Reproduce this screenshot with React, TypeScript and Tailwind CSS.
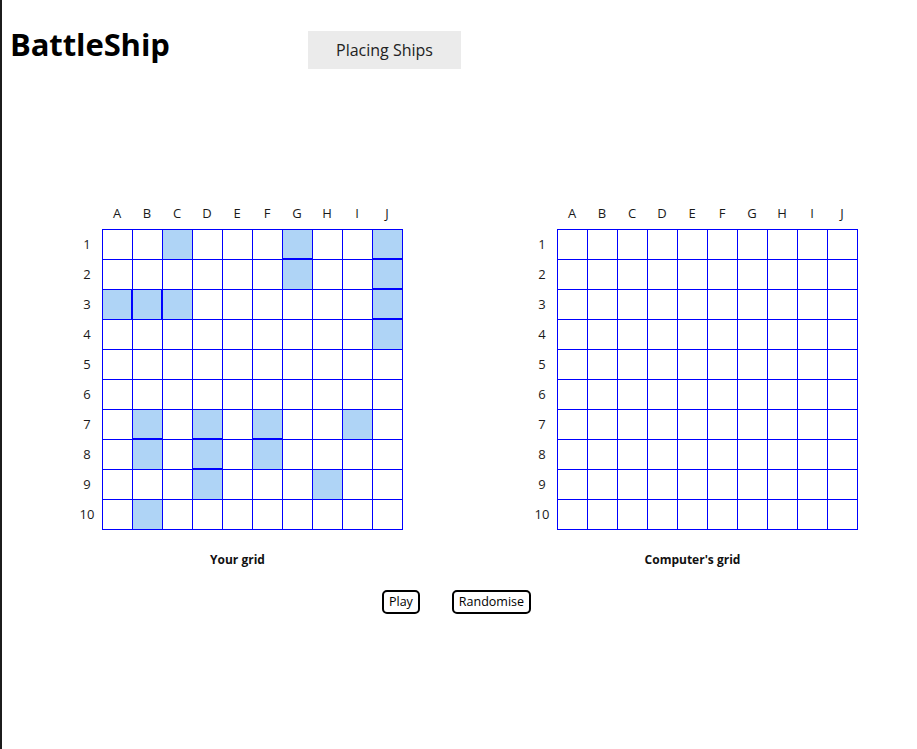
import React from 'react';

const letters = ['A', 'B', 'C', 'D', 'E', 'F', 'G', 'H', 'I', 'J'];

// ship cells on the player's board, as "row-col" (0-based)
const ships = new Set([
  '0-2', '0-6', '0-9',
  '1-6', '1-9',
  '2-0', '2-1', '2-2', '2-9',
  '3-9',
  '6-1', '6-3', '6-5', '6-8',
  '7-1', '7-3', '7-5',
  '8-3', '8-7',
  '9-1'
]);

interface BoardProps {
  title: string;
  showShips?: boolean;
}

const Board: React.FC<BoardProps> = ({ title, showShips = false }) => {
  const isShip = (r: number, c: number) => showShips && ships.has(`${r}-${c}`);

  const cellClass = (r: number, c: number) => {
    const ship = isShip(r, c);
    const below = isShip(r + 1, c);
    const right = isShip(r, c + 1);
    return [
      'w-[29px] h-[29px]',
      ship ? 'bg-[#afd4f6]' : 'bg-white',
      ship && below && right ? 'shadow-[inset_0_-1px_0_#0000ff,inset_-1px_0_0_#0000ff]' : '',
      ship && below && !right ? 'shadow-[inset_0_-1px_0_#0000ff]' : '',
      ship && right && !below ? 'shadow-[inset_-1px_0_0_#0000ff]' : ''
    ].filter(Boolean).join(' ');
  };

  return (
    <div className="flex flex-col items-center">
      <div className="flex flex-col">
        <div className="flex">
          <div className="w-[30px] h-[30px]" />
          {letters.map((l) => (
            <div key={l} className="w-[30px] h-[30px] flex items-center justify-center text-[13px] text-[#1a1a1a]">
              {l}
            </div>
          ))}
        </div>
        <div className="flex">
          <div className="flex flex-col pt-px">
            {Array.from({ length: 10 }).map((_, r) => (
              <div key={r} className="w-[30px] h-[30px] flex items-center justify-center text-[13px] text-[#1a1a1a]">
                {r + 1}
              </div>
            ))}
          </div>
          <div className="grid grid-cols-[repeat(10,29px)] gap-px p-px bg-[#0000ff] w-[301px] h-[301px]">
            {Array.from({ length: 100 }).map((_, i) => {
              const r = Math.floor(i / 10);
              const c = i % 10;
              return <div key={i} className={cellClass(r, c)} />;
            })}
          </div>
        </div>
      </div>
      <div className="mt-[21px] text-[12px] font-bold text-[#111]">{title}</div>
    </div>
  );
};

const App: React.FC = () => {
  return (
    <div className="min-h-screen bg-white border-l-2 border-[#1c1c1c] font-['Open_Sans',sans-serif] text-black">
      <div className="flex items-start">
        <h1 className="w-[306px] pl-[8px] pt-[24px] text-[31px] font-bold leading-[40px] tracking-[-0.1px]">
          BattleShip
        </h1>
        <div className="mt-[31px] w-[153px] h-[38px] bg-[#ebebeb] flex items-center justify-center text-[16px] text-[#222]">
          Placing Ships
        </div>
      </div>

      <div className="mt-[130px] flex pl-[70px] gap-[124px]">
        <Board title="Your grid" showShips />
        <Board title="Computer's grid" />
      </div>

      <div className="mt-[21px] flex justify-center gap-[32px] pr-[6px]">
        <button className="h-[24px] px-[5px] border-2 border-black rounded-[5px] text-[12.5px] leading-none bg-white">
          Play
        </button>
        <button className="h-[24px] px-[5px] border-2 border-black rounded-[5px] text-[12.5px] leading-none bg-white">
          Randomise
        </button>
      </div>
    </div>
  );
};

export default App;
